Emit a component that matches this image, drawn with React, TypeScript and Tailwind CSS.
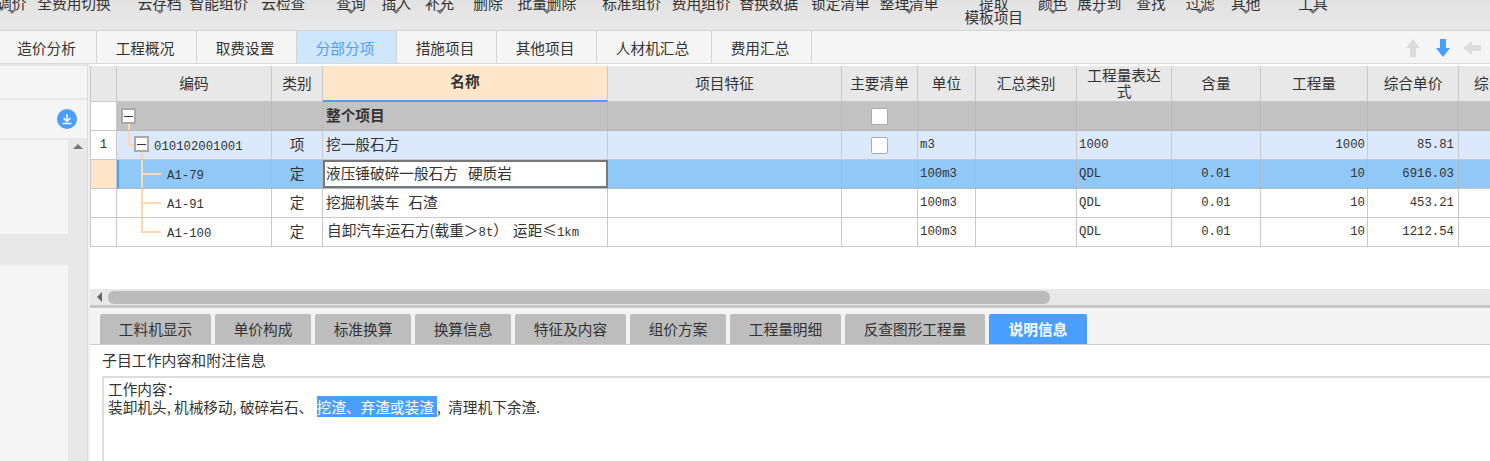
const toolbarItems = [
  { label: "调价", gap: "ml-[-3px]", caret: true },
  { label: "全费用切换", gap: "ml-[11px]" },
  { label: "云存档", gap: "ml-[27px]", caret: true },
  { label: "智能组价", gap: "ml-[8px]" },
  { label: "云检查", gap: "ml-[13px]" },
  { label: "查询", gap: "ml-[31px]", caret: true },
  { label: "插入", gap: "ml-[16px]", caret: true },
  { label: "补充", gap: "ml-[14px]", caret: true },
  { label: "删除", gap: "ml-[19px]" },
  { label: "批量删除", gap: "ml-[15px]", caret: true },
  { label: "标准组价", gap: "ml-[26px]" },
  { label: "费用组价", gap: "ml-[11px]", caret: true },
  { label: "替换数据", gap: "ml-[9px]" },
  { label: "锁定清单", gap: "ml-[13px]" },
  { label: "整理清单", gap: "ml-[10px]", caret: true },
  { label: "提取", second: "模板项目", gap: "ml-[26px]" },
  { label: "颜色", gap: "ml-[15px]", caret: true },
  { label: "展开到", gap: "ml-[10px]", caret: true },
  { label: "查找", gap: "ml-[15px]" },
  { label: "过滤", gap: "ml-[20px]", caret: true },
  { label: "其他", gap: "ml-[16px]", caret: true },
  { label: "工具", gap: "ml-[38px]", caret: true },
];

const mainTabs = [
  { label: "造价分析", width: "w-[97px]" },
  { label: "工程概况", width: "w-[100px]" },
  { label: "取费设置", width: "w-[100px]" },
  { label: "分部分项", width: "w-[100px]", active: true },
  { label: "措施项目", width: "w-[100px]" },
  { label: "其他项目", width: "w-[100px]" },
  { label: "人材机汇总", width: "w-[115px]" },
  { label: "费用汇总", width: "w-[100px]" },
];

const bottomTabs = [
  { label: "工料机显示", width: "w-[111px]" },
  { label: "单价构成", width: "w-[96px]" },
  { label: "标准换算", width: "w-[96px]" },
  { label: "换算信息", width: "w-[96px]" },
  { label: "特征及内容", width: "w-[111px]" },
  { label: "组价方案", width: "w-[96px]" },
  { label: "工程量明细", width: "w-[111px]" },
  { label: "反查图形工程量", width: "w-[140px]" },
];

const columns = [
  { label: "", width: "w-[26px]" },
  { label: "编码", width: "w-[155px]" },
  { label: "类别", width: "w-[51px]" },
  { label: "名称", width: "w-[285px]" },
  { label: "项目特征", width: "w-[234px]" },
  { label: "主要清单", width: "w-[76px]" },
  { label: "单位", width: "w-[58px]" },
  { label: "汇总类别", width: "w-[101px]" },
  { label: "工程量表达式", width: "w-[95px] px-[8px]" },
  { label: "含量", width: "w-[89px]" },
  { label: "工程量", width: "w-[107px]" },
  { label: "综合单价", width: "w-[91px]" },
  { label: "综合合价", width: "w-[32px]" },
];

const cellBorder = "border-r border-b border-[#c8c8c8]";
const mono = "font-['Liberation_Mono',monospace] text-[12.3px]";

const TreeBox = ({ className }: { className: string }) => (
  <span className={`absolute w-[15px] h-[16px] bg-white border-2 border-[#aaaaaa] flex items-center justify-center ${className}`}>
    <span className="w-[9px] h-[1px] bg-[#333333]" />
  </span>
);

const Check = () => (
  <span className="block mx-auto w-[17px] h-[17px] bg-white border border-[#aaaaaa] rounded-[2px]" />
);

const Caret = () => (
  <span className="w-0 h-0 border-l-[4px] border-r-[4px] border-t-[4px] border-x-transparent border-t-[#777777]" />
);

const DingRow = ({ code, name, price, selected, last }: { code: string; name: React.ReactNode; price: string; selected?: boolean; last?: boolean }) => {
  const bg = selected ? "bg-[#90c8f8]" : "bg-white";
  const border = selected ? "border-r border-b border-[#b0b8c0]" : cellBorder;
  return (
    <tr className="h-[29px]">
      <td className={`${cellBorder} ${selected ? "bg-[#ffe6c8]" : "bg-white"}`} />
      <td className={`${border} ${bg} relative ${selected ? "border-l-2 border-l-[#4a9eff]" : ""}`}>
        <span className={`absolute top-0 w-[2px] bg-[#ffd9ad] ${last ? "h-[14px]" : "bottom-0"} ${selected ? "left-[22px]" : "left-[24px]"}`} />
        <span className={`absolute top-[13px] w-[20px] h-[2px] bg-[#ffd9ad] ${selected ? "left-[22px]" : "left-[24px]"}`} />
        <span className={`${mono} ${selected ? "pl-[48px]" : "pl-[50px]"}`}>{code}</span>
      </td>
      <td className={`${border} ${bg} text-center pb-[2px]`}>定</td>
      {selected ? (
        <td className="p-0 bg-[#90c8f8] border-b border-[#b0b8c0]">
          <div className="h-[28px] bg-white border-2 border-[#777777] pl-[1px] pb-[2px] flex items-center">{name}</div>
        </td>
      ) : (
        <td className={`${border} ${bg} pl-[3px] pb-[2px]`}>{name}</td>
      )}
      <td className={`${border} ${bg}`} />
      <td className={`${border} ${bg}`} />
      <td className={`${border} ${bg} pl-[2px] ${mono}`}>100m3</td>
      <td className={`${border} ${bg}`} />
      <td className={`${border} ${bg} pl-[2px] ${mono}`}>QDL</td>
      <td className={`${border} ${bg} text-center ${mono}`}>0.01</td>
      <td className={`${border} ${bg} text-right pr-[2px] ${mono}`}>10</td>
      <td className={`${border} ${bg} text-right pr-[4px] ${mono}`}>{price}</td>
      <td className={`border-b border-[#c8c8c8] ${bg}`} />
    </tr>
  );
};

export default function App() {
  return (
    <div className="w-[1490px] h-[461px] overflow-hidden bg-white flex flex-col text-[14.67px] text-[#333333] font-['Noto_Sans_CJK_SC','Liberation_Sans',sans-serif]">
      {/* ribbon, scrolled off at the top in the screenshot */}
      <div className="h-[31px] shrink-0 overflow-hidden flex items-start bg-gradient-to-b from-[#e2e2e2] to-[#e9e9e9] border-b border-[#d4d4d4]">
        {toolbarItems.map((item) => (
          <div key={item.label} className={`${item.gap} -mt-[4px] shrink-0 flex flex-col items-center leading-[14px]`}>
            <span>{item.label}</span>
            {item.second && <span>{item.second}</span>}
            {item.caret && <Caret />}
          </div>
        ))}
      </div>

      <div className="h-[33px] shrink-0 flex bg-[#f5f5f5] border-b border-[#d8d8d8]">
        {mainTabs.map((tab) => (
          <div
            key={tab.label}
            className={`${tab.width} shrink-0 flex items-center justify-center pr-[3px] pt-[2px] border-r border-[#d4d4d4] ${tab.active ? "bg-[#cfe6ff] text-[#4a9eff]" : ""}`}
          >
            {tab.label}
          </div>
        ))}
        <div className="ml-auto flex items-center gap-[14px] mr-[8px] pt-[1px]">
          <svg width="16" height="20" viewBox="0 0 16 20" className="text-[#dcdcdc]">
            <path d="M8 1 L15 10 H11 V19 H5 V10 H1 Z" fill="currentColor" />
          </svg>
          <svg width="16" height="20" viewBox="0 0 16 20" className="text-[#4a9eff]">
            <path d="M5 1 H11 V10 H15 L8 19 L1 10 H5 Z" fill="currentColor" />
          </svg>
          <svg width="20" height="16" viewBox="0 0 20 16" className="text-[#dcdcdc] -ml-[3px]">
            <path d="M1 8 L10 1 V5 H19 V11 H10 V15 Z" fill="currentColor" />
          </svg>
        </div>
      </div>

      <div className="flex-1 min-h-0 flex">
        {/* left tree panel */}
        <div className="w-[87px] shrink-0 flex flex-col bg-[#e8e8e8] pt-[2px]">
          <div className="h-[32px] shrink-0 bg-[#f5f5f5]" />
          <div className="h-[38px] shrink-0 mt-[2px] bg-[#f5f5f5] flex items-center justify-end pr-[10px]">
            <span className="w-[20px] h-[20px] rounded-full bg-[#4a9eff] flex items-center justify-center">
              <svg width="12" height="12" viewBox="0 0 12 12" fill="none" stroke="white" strokeWidth="1.5">
                <path d="M6 1 V8 M2.5 5 L6 8.5 L9.5 5 M1.5 10.5 H10.5" />
              </svg>
            </span>
          </div>
          <div className="flex-1 mt-[2px] flex">
            <div className="w-[68px] shrink-0 flex flex-col">
              <div className="h-[94px] shrink-0 bg-[#f5f5f5]" />
              <div className="h-[31px] shrink-0 bg-[#e8e8e8]" />
              <div className="flex-1 bg-[#f5f5f5]" />
            </div>
            <div className="flex-1 flex justify-center pt-[4px]">
              <span className="w-0 h-0 border-l-[5px] border-r-[5px] border-b-[5px] border-x-transparent border-b-[#777777]" />
            </div>
          </div>
        </div>
        <div className="w-[3px] shrink-0 bg-[#f0f0f0] border-l border-[#dcdcdc]" />

        <div className="flex-1 min-w-0 flex flex-col">
          <div className="h-[225px] shrink-0 overflow-hidden pt-[2px]">
            <table className="table-fixed w-[1400px] border-separate border-spacing-0 border-l border-[#c8c8c8]">
              <thead>
                <tr className="h-[36px]">
                  {columns.map((col) => {
                    const isName = col.label === "名称";
                    return (
                      <th
                        key={col.label}
                        className={`${col.width} whitespace-normal leading-[16px] text-center border-r border-b border-[#c8c8c8] overflow-hidden ${isName ? "bg-[#ffe6c8] font-bold pb-[5px] border-b-2 border-b-[#4a9eff]" : "bg-[#e8e8e8] font-normal pb-[2px]"} ${col.label === "综合合价" ? "whitespace-nowrap text-left pl-[15px]" : ""}`}
                      >
                        {col.label}
                      </th>
                    );
                  })}
                </tr>
              </thead>
              <tbody>
                <tr className="h-[29px]">
                  <td className={`${cellBorder} bg-white`} />
                  <td className="relative bg-[#c2c2c2] border-r border-b border-[#bababa]">
                    <span className="absolute left-[11px] top-[21px] bottom-0 w-[2px] bg-[#ffd9ad]" />
                    <TreeBox className="left-[4px] top-[6px]" />
                  </td>
                  <td className="bg-[#c2c2c2] border-r border-b border-[#bababa]" />
                  <td className="bg-[#c2c2c2] border-r border-b border-[#bababa] pl-[3px] pb-[3px] font-bold">整个项目</td>
                  <td className="bg-[#c2c2c2] border-r border-b border-[#bababa]" />
                  <td className="bg-[#c2c2c2] border-r border-b border-[#bababa]"><Check /></td>
                  {[0, 1, 2, 3, 4, 5, 6].map((i) => (
                    <td key={i} className="bg-[#c2c2c2] border-r border-b border-[#bababa]" />
                  ))}
                </tr>
                <tr className="h-[29px]">
                  <td className={`${cellBorder} bg-white text-center ${mono}`}>1</td>
                  <td className={`${cellBorder} bg-[#dce9fd] relative`}>
                    <span className="absolute left-[11px] top-0 h-[14px] w-[2px] bg-[#ffd9ad]" />
                    <span className="absolute left-[11px] top-[13px] w-[6px] h-[2px] bg-[#ffd9ad]" />
                    <span className="absolute left-[24px] top-[21px] bottom-0 w-[2px] bg-[#ffd9ad]" />
                    <TreeBox className="left-[17px] top-[5px]" />
                    <span className={`${mono} pl-[37px]`}>010102001001</span>
                  </td>
                  <td className={`${cellBorder} bg-[#dce9fd] text-center pb-[2px]`}>项</td>
                  <td className={`${cellBorder} bg-[#dce9fd] pl-[3px] pb-[2px]`}>挖一般石方</td>
                  <td className={`${cellBorder} bg-[#dce9fd]`} />
                  <td className={`${cellBorder} bg-[#dce9fd]`}><Check /></td>
                  <td className={`${cellBorder} bg-[#dce9fd] pl-[2px] ${mono}`}>m3</td>
                  <td className={`${cellBorder} bg-[#dce9fd]`} />
                  <td className={`${cellBorder} bg-[#dce9fd] pl-[2px] ${mono}`}>1000</td>
                  <td className={`${cellBorder} bg-[#dce9fd]`} />
                  <td className={`${cellBorder} bg-[#dce9fd] text-right pr-[2px] ${mono}`}>1000</td>
                  <td className={`${cellBorder} bg-[#dce9fd] text-right pr-[4px] ${mono}`}>85.81</td>
                  <td className="border-b border-[#c8c8c8] bg-[#dce9fd]" />
                </tr>
                <DingRow
                  code="A1-79"
                  name={<span>液压锤破碎一般石方<span className="ml-[10px]">硬质岩</span></span>}
                  price="6916.03"
                  selected
                />
                <DingRow
                  code="A1-91"
                  name={<span>挖掘机装车<span className="ml-[9px]">石渣</span></span>}
                  price="453.21"
                />
                <DingRow
                  code="A1-100"
                  name={
                    <span className="pl-[1px] whitespace-nowrap">
                      自卸汽车运石方(载重＞<span className={mono}>8t</span>）<span className="ml-[5px]">运距≤</span><span className={mono}>1km</span>
                    </span>
                  }
                  price="1212.54"
                  last
                />
              </tbody>
            </table>
          </div>

          {/* horizontal scrollbar */}
          <div className="h-[19px] shrink-0 bg-[#e8e8e8] border-b-[3px] border-[#c8c8c8] flex items-center pl-[7px]">
            <span className="w-0 h-0 border-t-[5px] border-b-[5px] border-r-[5px] border-y-transparent border-r-[#666666]" />
            <span className="ml-[6px] w-[942px] h-[13px] rounded-[6px] bg-[#bbbbbb]" />
          </div>

          <div className="h-[37px] shrink-0 bg-[#f3f3f3] border-b border-[#cccccc] flex items-end gap-[4px] pl-[10px]">
            {bottomTabs.map((tab) => (
              <div key={tab.label} className={`${tab.width} h-[30px] rounded-t-[2px] bg-[#bdbdbd] flex items-center justify-center whitespace-nowrap`}>
                {tab.label}
              </div>
            ))}
            <div className="w-[98px] h-[30px] rounded-t-[2px] bg-[#4a9eff] text-white font-bold flex items-center justify-center">说明信息</div>
          </div>

          <div className="flex-1 min-h-0 flex flex-col pl-[12px] bg-white">
            <div className="h-[31px] shrink-0 flex items-center text-[14.9px]">子目工作内容和附注信息</div>
            <div className="flex-1 border-l-2 border-t-2 border-[#dddddd] pl-[4px] pt-[2px] leading-[18px]">
              <div>工作内容：</div>
              <div className="whitespace-nowrap">
                装卸机头, 机械移动, 破碎岩石、 <span className="bg-[#4a9eff] text-white pr-[3px]">挖渣、弃渣或装渣</span>, <span className="ml-[4px]">清理机下余渣.</span>
              </div>
            </div>
          </div>
        </div>
      </div>
    </div>
  );
}
